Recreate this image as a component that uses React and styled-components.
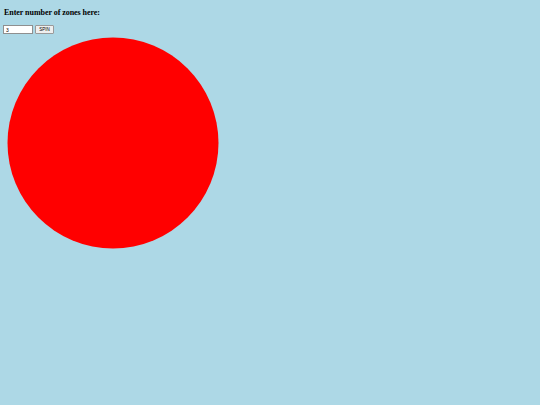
import React from "react";
import styled, { createGlobalStyle } from "styled-components";

const Global = createGlobalStyle`
  html, body { margin: 0; padding: 0; background: #add8e6; }
  body { font-family: "Liberation Serif", "Times New Roman", serif; }
`;

const Page = styled.div`
  padding: 0 3px;
  display: flex;
  flex-direction: column;
  align-items: flex-start;
`;

const Title = styled.h4`
  margin: 8px 0 0 1px;
  font-size: 8px;
  line-height: 9px;
  font-weight: bold;
  letter-spacing: -0.05px;
  color: #000;
`;

const Controls = styled.div`
  display: flex;
  align-items: center;
  gap: 2px;
  margin-top: 8px;
`;

const ZoneInput = styled.input`
  box-sizing: border-box;
  width: 30px;
  height: 9px;
  padding: 0 2px;
  border: 1px solid #8f8f8f;
  background: #fff;
  font-family: "Liberation Sans", Arial, sans-serif;
  font-size: 5px;
  color: #000;
  outline: none;
`;

const SpinButton = styled.button`
  box-sizing: border-box;
  width: 19px;
  height: 9px;
  padding: 0;
  border: 1px solid #9a9a9a;
  border-radius: 1px;
  background: #efefef;
  font-family: "Liberation Sans", Arial, sans-serif;
  font-size: 4.5px;
  line-height: 7px;
  color: #000;
`;

const Wheel = styled.svg`
  display: block;
  margin-top: 1px;
`;

export default function App() {
  return (
    <>
      <Global />
      <Page>
        <Title>Enter number of zones here:</Title>
        <Controls>
          <ZoneInput defaultValue="3" />
          <SpinButton>SPIN</SpinButton>
        </Controls>
        <Wheel width="220" height="215" viewBox="0 0 220 215">
          <circle cx="110" cy="108" r="105.5" fill="#ff0000" />
        </Wheel>
      </Page>
    </>
  );
}
